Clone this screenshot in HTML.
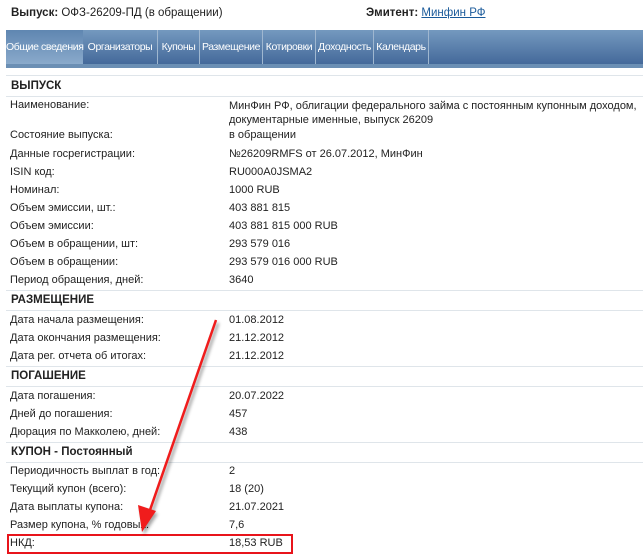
<!DOCTYPE html>
<html><head><meta charset="utf-8"><style>
body{margin:0;width:643px;height:555px;background:#fff;position:relative;overflow:hidden;font-family:"Liberation Sans",Arial,sans-serif;font-size:11px;color:#222}
.a{position:absolute;white-space:nowrap;line-height:13px}
.hl{position:absolute;left:6px;right:0;height:1px;background:#dfe5ea}
.h{font-weight:bold;font-size:11.5px;color:#222}
#tabs{position:absolute;left:6px;top:30px;width:637px;height:34px;background:linear-gradient(#7499bf,#44699a)}
#strip{position:absolute;left:6px;top:64px;width:637px;height:4px;background:#6b8fb4}
.t{position:absolute;top:0;height:34px;line-height:34px;color:#fff;font-size:10.5px;text-align:center;border-right:1px solid #9fb7d0;letter-spacing:-0.4px;white-space:nowrap}
</style></head><body>
<div class="a" style="left:11px;top:7px;font-size:11.5px"><b>Выпуск:</b> ОФЗ-26209-ПД (в обращении)</div>
<div class="a" style="left:366px;top:7px;font-size:11.5px"><b>Эмитент:</b> <span style="color:#1a5a9a;text-decoration:underline">Минфин РФ</span></div>
<div id="tabs">
<div class="t" style="left:0;width:77px;background:linear-gradient(#5f86b1,#8aaacb);border-right:none">Общие сведения</div>
<div class="t" style="left:77px;width:74px">Организаторы</div>
<div class="t" style="left:152px;width:41px">Купоны</div>
<div class="t" style="left:194px;width:62px">Размещение</div>
<div class="t" style="left:257px;width:52px">Котировки</div>
<div class="t" style="left:310px;width:57px">Доходность</div>
<div class="t" style="left:368px;width:54px">Календарь</div>
</div>
<div id="strip"></div>
<div class="hl" style="top:75px"></div>
<div class="hl" style="top:96px"></div>
<div class="a h" style="left:11px;top:80px">ВЫПУСК</div>
<div class="a" style="left:10px;top:99px">Наименование:</div>
<div class="a" style="left:229px;top:99px;line-height:14px">МинФин РФ, облигации федерального займа с постоянным купонным доходом,<br>документарные именные, выпуск 26209</div>
<div class="a" style="left:10px;top:129px">Состояние выпуска:</div><div class="a" style="left:229px;top:129px">в обращении</div>
<div class="a" style="left:10px;top:148px">Данные госрегистрации:</div><div class="a" style="left:229px;top:148px">№26209RMFS от 26.07.2012, МинФин</div>
<div class="a" style="left:10px;top:166px">ISIN код:</div><div class="a" style="left:229px;top:166px">RU000A0JSMA2</div>
<div class="a" style="left:10px;top:184px">Номинал:</div><div class="a" style="left:229px;top:184px">1000 RUB</div>
<div class="a" style="left:10px;top:202px">Объем эмиссии, шт.:</div><div class="a" style="left:229px;top:202px">403 881 815</div>
<div class="a" style="left:10px;top:220px">Объем эмиссии:</div><div class="a" style="left:229px;top:220px">403 881 815 000 RUB</div>
<div class="a" style="left:10px;top:238px">Объем в обращении, шт:</div><div class="a" style="left:229px;top:238px">293 579 016</div>
<div class="a" style="left:10px;top:256px">Объем в обращении:</div><div class="a" style="left:229px;top:256px">293 579 016 000 RUB</div>
<div class="a" style="left:10px;top:274px">Период обращения, дней:</div><div class="a" style="left:229px;top:274px">3640</div>
<div class="hl" style="top:290px"></div>
<div class="a h" style="left:11px;top:294px">РАЗМЕЩЕНИЕ</div>
<div class="hl" style="top:310px"></div>
<div class="a" style="left:10px;top:314px">Дата начала размещения:</div><div class="a" style="left:229px;top:314px">01.08.2012</div>
<div class="a" style="left:10px;top:332px">Дата окончания размещения:</div><div class="a" style="left:229px;top:332px">21.12.2012</div>
<div class="a" style="left:10px;top:350px">Дата рег. отчета об итогах:</div><div class="a" style="left:229px;top:350px">21.12.2012</div>
<div class="hl" style="top:366px"></div>
<div class="a h" style="left:11px;top:370px">ПОГАШЕНИЕ</div>
<div class="hl" style="top:386px"></div>
<div class="a" style="left:10px;top:390px">Дата погашения:</div><div class="a" style="left:229px;top:390px">20.07.2022</div>
<div class="a" style="left:10px;top:408px">Дней до погашения:</div><div class="a" style="left:229px;top:408px">457</div>
<div class="a" style="left:10px;top:426px">Дюрация по Макколею, дней:</div><div class="a" style="left:229px;top:426px">438</div>
<div class="hl" style="top:442px"></div>
<div class="a h" style="left:11px;top:446px">КУПОН - Постоянный</div>
<div class="hl" style="top:462px"></div>
<div class="a" style="left:10px;top:465px">Периодичность выплат в год:</div><div class="a" style="left:229px;top:465px">2</div>
<div class="a" style="left:10px;top:483px">Текущий купон (всего):</div><div class="a" style="left:229px;top:483px">18 (20)</div>
<div class="a" style="left:10px;top:501px">Дата выплаты купона:</div><div class="a" style="left:229px;top:501px">21.07.2021</div>
<div class="a" style="left:10px;top:519px">Размер купона, % годовых:</div><div class="a" style="left:229px;top:519px">7,6</div>
<div class="a" style="left:10px;top:537px">НКД:</div><div class="a" style="left:229px;top:537px">18,53 RUB</div>
<div style="position:absolute;left:7px;top:534px;width:282px;height:16px;border:2px solid #e8141b"></div>
<svg style="position:absolute;left:0;top:0" width="643" height="555">
<defs><filter id="s"><feGaussianBlur stdDeviation="1.5"/></filter></defs>
<g opacity="0.35" filter="url(#s)" transform="translate(2,3)"><line x1="216" y1="320" x2="150" y2="510" stroke="#000" stroke-width="3"/><polygon points="142,532 138,505 156,511" fill="#000"/></g>
<line x1="216" y1="320" x2="150" y2="510" stroke="#f01c1c" stroke-width="2.5"/>
<polygon points="142,532 138,505 156,511" fill="#f01c1c"/>
</svg>
</body></html>
